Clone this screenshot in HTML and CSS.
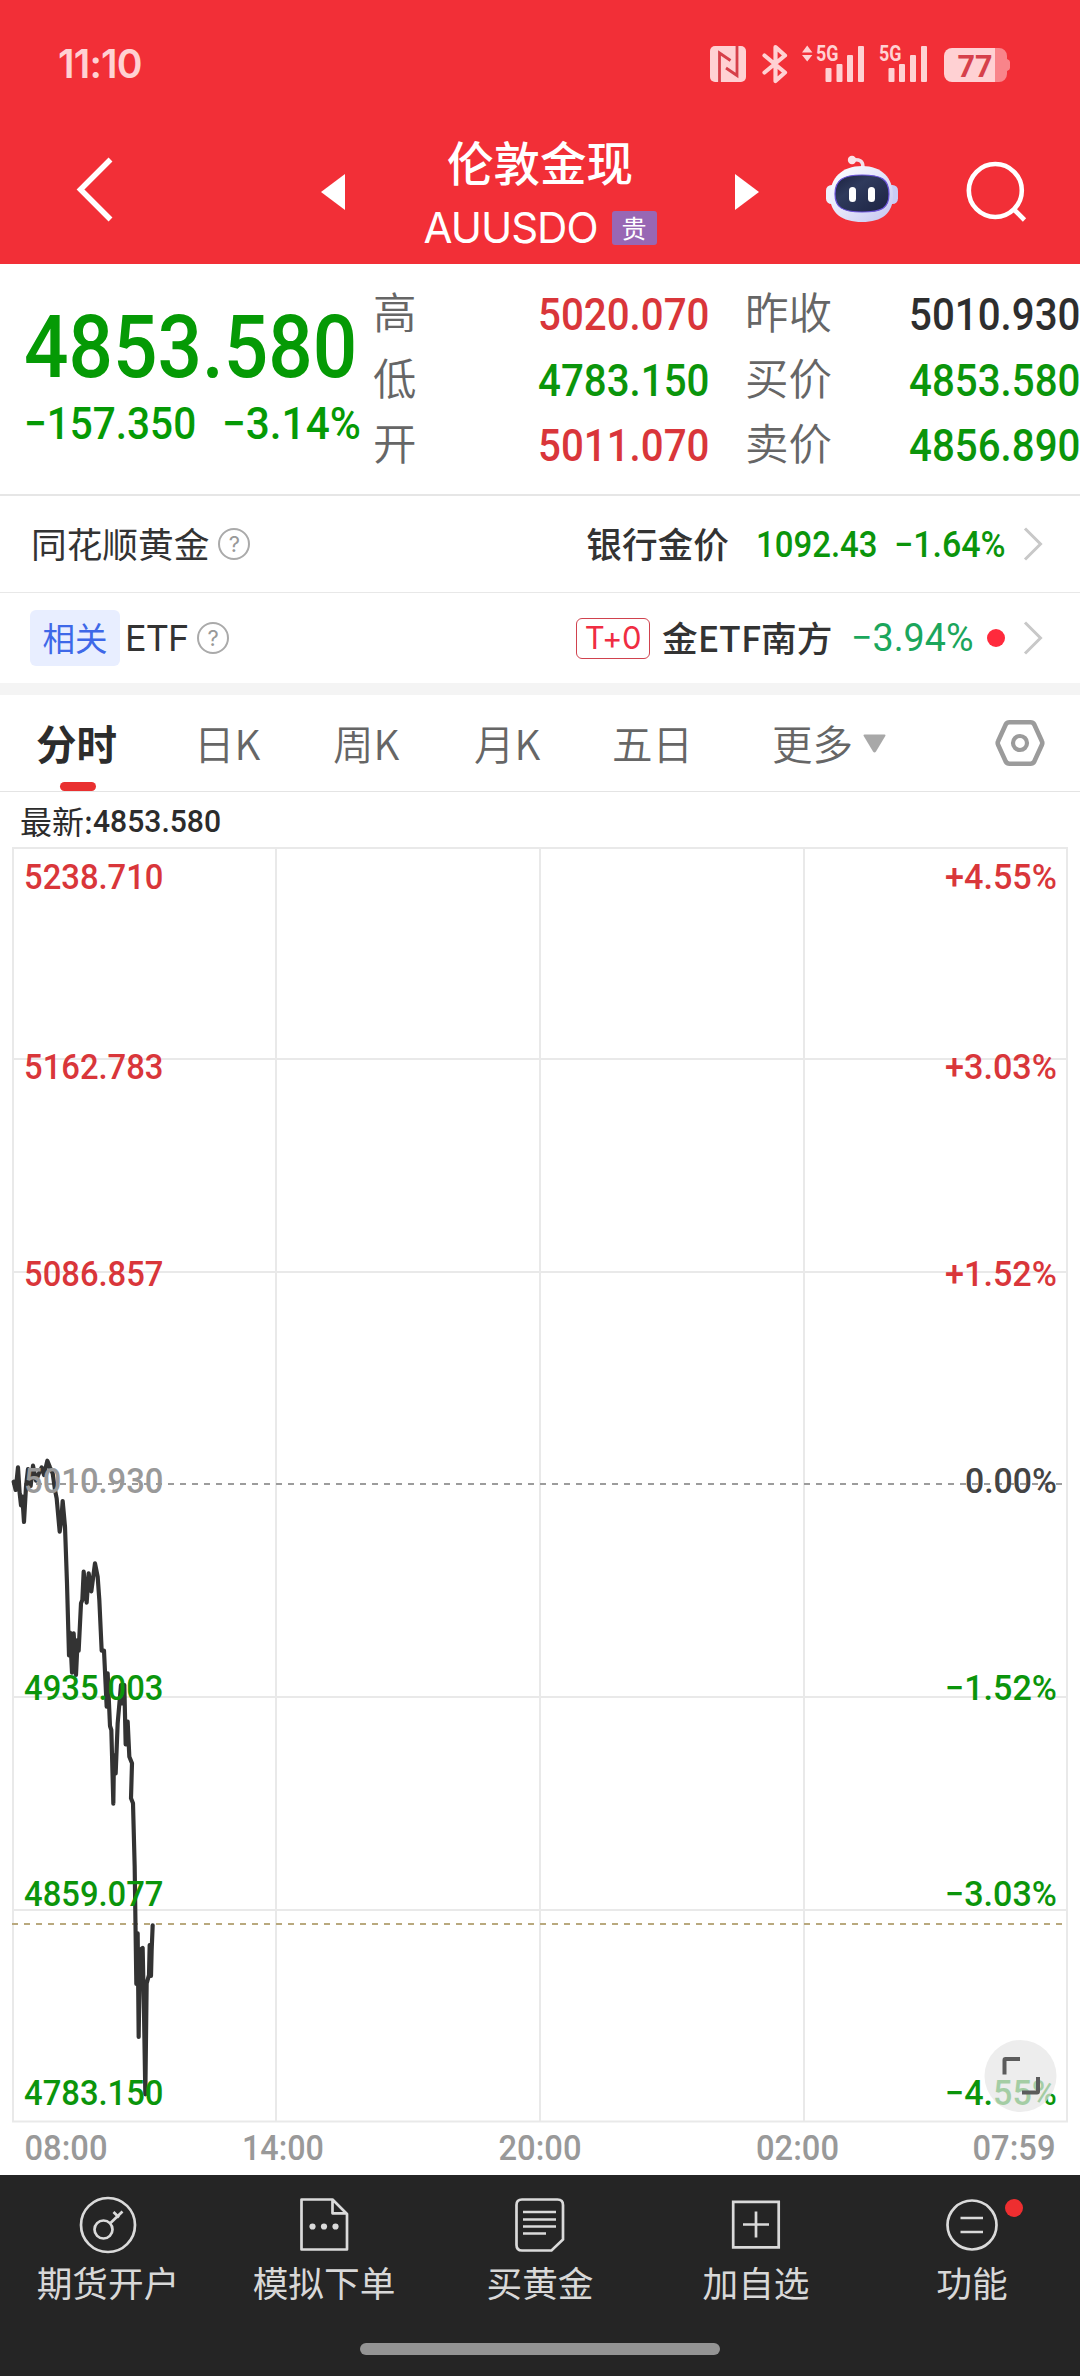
FILE: index.html
```html
<!DOCTYPE html>
<html lang="zh-CN">
<head>
<meta charset="utf-8">
<title>伦敦金现 AUUSDO</title>
<link rel="stylesheet" href="styles.css">
</head>
<body>
<div class="screen">
  <header class="top">
    <div class="status">
      <span class="clock">11:10</span>
      <svg class="status-icons" width="304" height="44" viewBox="708 42 304 44">
        <g fill="#ffd1d3">
          <rect x="710" y="46" width="36" height="36" rx="5"/>
          <path d="M802 52.500l5.200-7 5.200 7zM802 55l5.200 6.500 5.200-6.500z"/>
          <rect x="825.500" y="68" width="6" height="14" rx="1"/><rect x="836.500" y="64" width="6" height="18" rx="1"/><rect x="847" y="55" width="6" height="27" rx="1"/><rect x="858" y="46" width="6" height="36" rx="1"/>
          <rect x="888.500" y="68" width="6" height="14" rx="1"/><rect x="899" y="64" width="6" height="18" rx="1"/><rect x="910" y="55" width="6" height="27" rx="1"/><rect x="921" y="46" width="6" height="36" rx="1"/>
          <text class="net" x="816" y="61" textLength="22.500" lengthAdjust="spacingAndGlyphs">5G</text>
          <text class="net" x="879" y="61" textLength="22.500" lengthAdjust="spacingAndGlyphs">5G</text>
          <path d="M995 48H952a8 8 0 0 0-8 8v18a8 8 0 0 0 8 8h43z"/>
        </g>
        <path fill="#f9848a" d="M995 48h4a8 8 0 0 1 8 8v3q3 1 3 3v6q0 2-3 3v3a8 8 0 0 1-8 8h-4z"/>
        <text class="batt" x="957.500" y="77" textLength="35" lengthAdjust="spacingAndGlyphs">77</text>
        <path d="M719.500 82V53l11 7.500M737 46v29.500l-11-7.500" fill="none" stroke="#d6404a" stroke-width="2.800"/>
        <path d="M764.500 55.500L785 72.500l-9.500 8.500V47l9.500 8.500L764.500 72.500" fill="none" stroke="#ffd1d3" stroke-width="4.200" stroke-linejoin="round" stroke-linecap="round"/>
      </svg>
    </div>
    <div class="nav">
      <svg class="back" width="38" height="68" viewBox="76 156 38 68"><path d="M110.500 159.500L80.500 189.500l30 30" fill="none" stroke="#fff" stroke-width="5.500"/></svg>
      <svg class="prev" width="24" height="36" viewBox="0 0 24 36"><path d="M0 18L24 0v36z" fill="#fff"/></svg>
      <div class="title">
        <div class="name">伦敦金现</div>
        <div class="code"><span class="code-text">AUUSDO</span><span class="badge">贵</span></div>
      </div>
      <svg class="next" width="24" height="36" viewBox="0 0 24 36"><path d="M24 18L0 0v36z" fill="#fff"/></svg>
      <svg class="robot" width="74" height="68" viewBox="824 155 74 68">
        <defs>
          <linearGradient id="shell" x1="0" y1="0" x2="1" y2="1"><stop offset="0" stop-color="#fff"/><stop offset=".5" stop-color="#e4e6fa"/><stop offset="1" stop-color="#c3c4f0"/></linearGradient>
          <linearGradient id="visor" x1="0" y1="0" x2="1" y2="1"><stop offset="0" stop-color="#1b2140"/><stop offset=".35" stop-color="#2f3a5c"/><stop offset="1" stop-color="#1c2343"/></linearGradient>
        </defs>
        <path d="M851 160q11-2 11 7" fill="none" stroke="#f3dfe9" stroke-width="3.500"/>
        <circle cx="851" cy="160" r="4.200" fill="#fbe3e8"/>
        <rect x="825" y="185" width="12" height="19" rx="5.500" fill="#eef0fc"/><rect x="885" y="185" width="12" height="19" rx="5.500" fill="#c9cdf6"/>
        <path d="M861 166c20 0 31 12 31 30 0 17-11 26-31 26s-32-9-32-26c0-18 12-30 32-30z" fill="url(#shell)"/>
        <path d="M861 175c19 0 27 4 27 19 0 14-7 18-27 18s-27-5-27-18c0-14 8-19 27-19z" fill="url(#visor)" stroke="#6a52d8" stroke-width="1.200"/>
        <rect x="848" y="187" width="7" height="15" rx="3.500" fill="#fff"/><rect x="867" y="187" width="7" height="15" rx="3.500" fill="#fff"/>
      </svg>
      <svg class="search" width="64" height="64" viewBox="963 160 64 64"><g fill="none" stroke="#fff" stroke-width="4.600"><circle cx="994.300" cy="190.500" r="26.500"/><path d="M1013.500 210l10 10"/></g></svg>
    </div>
  </header>

  <section class="quote">
    <div class="price">
      <div class="last"><span class="num">4853.580</span></div>
      <div class="change"><span class="num diff">−157.350</span><span class="num pct">−3.14%</span></div>
    </div>
    <dl class="stats">
      <dt>高</dt><dd class="red"><span class="num">5020.070</span></dd><dt>昨收</dt><dd class="ink"><span class="num">5010.930</span></dd>
      <dt>低</dt><dd class="green"><span class="num">4783.150</span></dd><dt>买价</dt><dd class="green"><span class="num">4853.580</span></dd>
      <dt>开</dt><dd class="red"><span class="num">5011.070</span></dd><dt>卖价</dt><dd class="green"><span class="num">4856.890</span></dd>
    </dl>
  </section>

  <section class="row row-gold">
    <span class="row-name">同花顺黄金</span>
    <span class="help">?</span>
    <div class="row-end">
      <span class="bank">银行金价</span>
      <span class="num bank-price">1092.43</span>
      <span class="num bank-pct">−1.64%</span>
      <svg class="chev" width="20" height="34" viewBox="0 0 20 34"><path d="M2 1.500L17.500 17 2 32.500" fill="none" stroke="#c8c8c8" stroke-width="3"/></svg>
    </div>
  </section>
  <section class="row row-etf">
    <span class="tag">相关</span>
    <span class="etf">ETF</span>
    <span class="help">?</span>
    <div class="row-end">
      <span class="t0">T+0</span>
      <span class="fund">金ETF南方</span>
      <span class="num fund-pct">−3.94%</span>
      <i class="dot"></i>
      <svg class="chev" width="20" height="34" viewBox="0 0 20 34"><path d="M2 1.500L17.500 17 2 32.500" fill="none" stroke="#c8c8c8" stroke-width="3"/></svg>
    </div>
  </section>

  <nav class="tabs">
    <span class="tab active">分时</span>
    <span class="tab">日K</span>
    <span class="tab">周K</span>
    <span class="tab">月K</span>
    <span class="tab">五日</span>
    <span class="tab more">更多<svg width="23" height="19" viewBox="0 0 23 19"><path d="M1.500.500h20q1.500 0 .800 1.500L13 17.500q-1.500 2-3 0L.700 2Q0 .500 1.500.500z" fill="#a8a8a8"/></svg></span>
    <svg class="gear" width="50" height="50" viewBox="995 718 50 50"><g fill="none" stroke="#9b9b9b"><path d="M1009.500 722.300h21q2.500 0 3.800 2.200l7.500 16.500q1 2 0 4l-7.500 16.500q-1.300 2.200-3.800 2.200h-21q-2.500 0-3.800-2.200l-7.500-16.500q-1-2 0-4l7.500-16.500q1.300-2.200 3.800-2.200z" stroke-width="4.600"/><circle cx="1020" cy="743" r="7" stroke-width="4.200"/></g></svg>
  </nav>

  <section class="chart">
    <div class="latest"><span>最新:</span><span class="num">4853.580</span></div>
    <svg class="plot" width="1080" height="1328" viewBox="0 847 1080 1328">
      <g fill="none" stroke="#e9e9e9" stroke-width="2">
        <rect x="13" y="848" width="1054" height="1273.500"/>
        <path d="M276 847V2122M540 847V2122M804 847V2122M12 1059H1067M12 1272H1067M12 1697H1067M12 1910H1067"/>
      </g>
      <path d="M12 1484H1064" stroke="#9c9c9c" stroke-width="2" stroke-dasharray="6 6"/>
      <path d="M12 1924H1064" stroke="#b9a97e" stroke-width="2" stroke-dasharray="6 6"/>
      <path transform="translate(0 1430) scale(.33333)" fill="none" stroke="#333" stroke-width="12.500" stroke-linejoin="round" stroke-linecap="round" d="M41 155L47 180 54 112 59 190 63 226 67 200 72 276 78 170 84 117 92 168 99 107 108 152 116 132 125 112 132 135 142 92 150 112 158 130 165 180 170 205 179 305 184 270 188 213 195 290 201 460 207 676 210 608 216 728 221 610 228 735 233 630 236 662 243 520 247 510 251 425 260 518 266 430 274 484 285 400 293 440 298 510 305 662 312 662 320 830 323 730 330 888 334 900 340 1121 342 975 347 1030 353 880 360 800 363 765 368 820 373 765 377 943 383 875 388 980 396 1000 393 1105 399 1120 404 1308 409 1662 413 1510 416 1821 420 1560 428 1554 432 1750 436 1993 440 1660 447 1635 449 1545 453 1638 455 1560 458 1486"/>
      <g class="axis red">
        <text x="24" y="888.500" textLength="139.500" lengthAdjust="spacingAndGlyphs">5238.710</text><text x="24" y="1078.500" textLength="139.500" lengthAdjust="spacingAndGlyphs">5162.783</text><text x="24" y="1286" textLength="139.500" lengthAdjust="spacingAndGlyphs">5086.857</text>
        <text x="945" y="888.500" textLength="112" lengthAdjust="spacingAndGlyphs">+4.55%</text><text x="945" y="1078.500" textLength="112" lengthAdjust="spacingAndGlyphs">+3.03%</text><text x="945" y="1286" textLength="112" lengthAdjust="spacingAndGlyphs">+1.52%</text>
      </g>
      <g class="axis mid"><text class="base" x="24" y="1492.500" textLength="139.500" lengthAdjust="spacingAndGlyphs">5010.930</text><text x="965" y="1492.500" textLength="92" lengthAdjust="spacingAndGlyphs">0.00%</text></g>
      <g class="axis green">
        <text x="24" y="1700" textLength="139.500" lengthAdjust="spacingAndGlyphs">4935.003</text><text x="24" y="1906" textLength="139.500" lengthAdjust="spacingAndGlyphs">4859.077</text><text x="24" y="2105" textLength="139.500" lengthAdjust="spacingAndGlyphs">4783.150</text>
        <text x="945" y="1700" textLength="112" lengthAdjust="spacingAndGlyphs">−1.52%</text><text x="945" y="1906" textLength="112" lengthAdjust="spacingAndGlyphs">−3.03%</text><text x="945" y="2105" textLength="112" lengthAdjust="spacingAndGlyphs">−4.55%</text>
      </g>
      <g class="axis time">
        <text x="24.500" y="2160" textLength="83" lengthAdjust="spacingAndGlyphs">08:00</text><text x="242" y="2160" textLength="82" lengthAdjust="spacingAndGlyphs">14:00</text><text x="498.500" y="2160" textLength="83" lengthAdjust="spacingAndGlyphs">20:00</text><text x="756" y="2160" textLength="83" lengthAdjust="spacingAndGlyphs">02:00</text><text x="972.500" y="2160" textLength="83" lengthAdjust="spacingAndGlyphs">07:59</text>
      </g>
      <circle cx="1020.500" cy="2076" r="36" fill="#e6e6e6" fill-opacity=".7"/>
      <path d="M1004.500 2074.500V2060q0-1 1-1H1020M1022 2092.500h15q1 0 1-1V2077" fill="none" stroke="#5c5c5c" stroke-width="4"/>
    </svg>
  </section>

  <footer class="bar">
    <div class="actions">
      <div class="action"><svg width="60" height="60" viewBox="77.500 2195.500 60 60"><g fill="none" stroke="#dadada" stroke-width="2.700"><circle cx="107.500" cy="2225.500" r="27"/><circle cx="103" cy="2230" r="9"/><path d="M110 2223.500l12-11.500M113 2212.500l5.500 5.500"/></g></svg><span>期货开户</span></div>
      <div class="action"><svg width="60" height="60" viewBox="293.500 2195.500 60 60"><path d="M301 2200h31l14.500 14.500V2250H301zM332 2200v13.800h14.500" fill="none" stroke="#dadada" stroke-width="2.700" stroke-linejoin="round"/><g fill="#dadada"><circle cx="312" cy="2227" r="3.100"/><circle cx="323.500" cy="2227" r="3.100"/><circle cx="335" cy="2227" r="3.100"/></g></svg><span>模拟下单</span></div>
      <div class="action"><svg width="60" height="60" viewBox="510 2195.500 60 60"><path d="M522 2200h35.500q5.500 0 5.500 5.500V2240l-11.500 11H522q-5.500 0-5.500-5.500v-40q0-5.500 5.500-5.500zM523 2212.500h33M523 2220h33M523 2227h33M523 2234h23" fill="none" stroke="#dadada" stroke-width="2.700"/></svg><span>买黄金</span></div>
      <div class="action"><svg width="60" height="60" viewBox="725 2195.500 60 60"><path d="M732.200 2202.300h45.500v45.500h-45.500zM742 2225h26M755 2212v26" fill="none" stroke="#dadada" stroke-width="2.700"/></svg><span>加自选</span></div>
      <div class="action"><svg width="60" height="60" viewBox="941.500 2195.500 60 60"><g fill="none" stroke="#dadada" stroke-width="2.700"><circle cx="971.500" cy="2225.500" r="24.500"/><path d="M960 2218.500h22.500M960 2232.500h22.500"/></g></svg><i class="notice"></i><span>功能</span></div>
    </div>
    <div class="home"></div>
  </footer>
</div>
</body>
</html>
```
FILE: styles.css
```css
* { box-sizing: border-box; }
body { margin: 0; background: #fff; font-family: "Noto Sans CJK SC", sans-serif; color: #333; }
svg { display: block; flex: none; }
.screen { width: 1080px; height: 2376px; overflow: hidden; display: flex; flex-direction: column; background: #fff; }
.screen > * { flex: none; }
.num { display: inline-block; font-family: Roboto, sans-serif; font-weight: 500; white-space: nowrap; transform-origin: left center; transform: scaleX(.915); }
.red { color: #d9363a; fill: #d9363a; }
.green { color: #0b950b; fill: #0b950b; }
.ink { color: #2e2e2e; }

.top { height: 264px; background: #f22f37; color: #fff; }
.status { height: 84px; padding: 42px 68px 0 58px; display: flex; justify-content: space-between; }
.clock { font: 600 39px/44px Inter, sans-serif; color: #ffd1d3; letter-spacing: -.8px; }
.net { font: 700 21.500px Roboto, sans-serif; }
.batt { font: 700 31px Roboto, sans-serif; fill: #d6404a; }
.nav { height: 180px; display: flex; padding-left: 76px; }
.back { margin-top: 72px; }
.prev { margin: 90px 0 0 207px; }
.next { margin-top: 90px; }
.title { width: 390px; text-align: center; padding-top: 47px; }
.name { font-size: 46.500px; line-height: 60px; font-weight: 500; }
.code { display: flex; justify-content: center; align-items: center; gap: 14px; height: 74px; }
.code-text { font: 400 42px/60px Inter, sans-serif; letter-spacing: -1px; }
.badge { width: 45px; height: 34px; border-radius: 3px; background: #9867b4; font-size: 25px; line-height: 33px; }
.robot { margin: 71px 0 0 66px; }
.search { margin: 76px 0 0 65px; }

.quote { height: 232px; border-bottom: 2px solid #e6e6e6; display: flex; }
.price { width: 373px; padding-left: 24px; color: #059a05; }
.last { display: flex; font-size: 87px; line-height: 88px; height: 134px; padding-top: 39px; }
.last .num { transform: scaleX(.9); }
.change { display: flex; font-size: 45px; line-height: 52px; }
.change .diff { width: 198px; transform: scaleX(.9); }
.change .pct { transform: scaleX(.94); }
.stats { margin: 0; padding-top: 14px; display: grid; grid-template-columns: 165px 207px 164px 169px; grid-auto-rows: 65.500px; line-height: 65.500px; }
.stats dt { font-size: 43.500px; color: #666; font-weight: 350; }
.stats dd { margin: 0; font-size: 45px; }
.stats .num { transform: scaleX(.895); }

.row { display: flex; align-items: center; font-size: 35.700px; }
.row-gold { height: 97px; border-bottom: 1px solid #e8e8e8; padding-left: 31px; }
.row-name, .bank, .fund { transform: translateY(-2px); }
.row-etf { height: 90px; padding-left: 30px; }
.help { width: 32px; height: 32px; border: 2px solid #aaa; border-radius: 50%; color: #999; font: 400 22px/28px Inter, sans-serif; text-align: center; margin-left: 9px; }
.row-end { margin-left: auto; padding-right: 37px; display: flex; align-items: center; }
.bank { font-weight: 500; }
.bank-price, .bank-pct { font-size: 36px; line-height: 54px; padding-top: 2px; color: #0b950b; }
.bank-price { width: 138px; margin-left: 27px; }
.bank-pct { width: 129px; transform: scaleX(.945); }
.tag { width: 90px; height: 56px; border-radius: 6px; background: #e8eeff; color: #3e68e8; font-size: 32.500px; line-height: 54px; text-align: center; }
.etf { margin-left: 5px; width: 63px; font: 400 36px/50px Inter, sans-serif; letter-spacing: -1px; }
.t0 { width: 74px; height: 41px; border: 1.500px solid #d0424e; border-radius: 6px; color: #f02d42; font: 400 31px/38px Inter, sans-serif; letter-spacing: -.5px; text-align: center; }
.fund { margin-left: 12px; width: 189px; white-space: nowrap; font-weight: 500; }
.fund-pct { font-size: 39px; font-weight: 400; color: #1ba65c; width: 136px; transform: scaleX(.965); }
.dot { width: 18px; height: 18px; border-radius: 50%; background: #ff2a3c; margin-right: 18px; }

.tabs { height: 109px; border-top: 12px solid #f4f4f4; border-bottom: 1px solid #e4e4e4; display: grid; grid-template-columns: 158px 139px 141px 138px 160px 223px 50px; padding-left: 36px; font-size: 40.500px; line-height: 96px; color: #666; font-weight: 350; align-items: center; }
.active { position: relative; color: #2c2c2c; font-weight: 700; }
.active::after { content: ""; position: absolute; left: 24px; bottom: 0; width: 36px; height: 9px; border-radius: 5px; background: #e93030; }
.more { display: flex; align-items: center; gap: 10px; }

.latest { height: 55px; padding-left: 20px; display: flex; font-size: 32px; line-height: 56px; color: #2c2c2c; }
.latest .num { padding-top: 1px; transform: scaleX(.94); }
.axis { font: 500 35px Roboto, sans-serif; }
.mid { fill: #444; }
.base, .time { fill: #999; }

.bar { height: 201px; background: #252525; color: #d8d8d8; }
.actions { display: grid; grid-template-columns: repeat(5, 216px); height: 168px; padding-top: 20px; }
.action { position: relative; display: flex; flex-direction: column; align-items: center; font-size: 35.700px; line-height: 50px; font-weight: 400; gap: 2px; }
.notice { position: absolute; left: 141px; top: 4px; width: 18px; height: 18px; border-radius: 50%; background: #ee2e30; }
.home { width: 360px; height: 12px; border-radius: 6px; background: #949494; margin: 0 auto; }
```
